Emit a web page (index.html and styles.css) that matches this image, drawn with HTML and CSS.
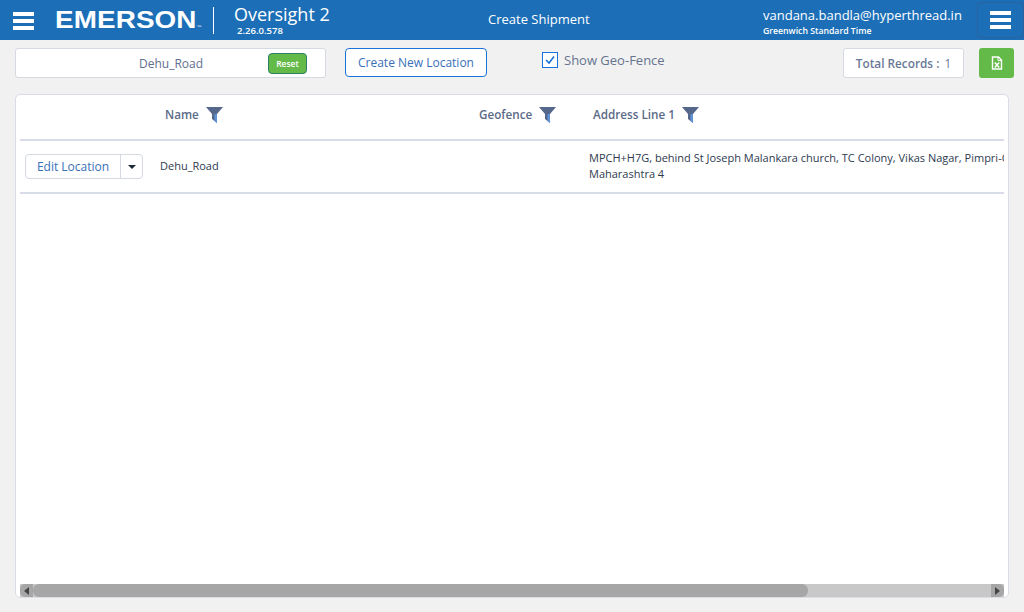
FILE: index.html
```html
<!DOCTYPE html>
<html lang="en">
<head>
  <meta charset="UTF-8">
  <title>Oversight 2 – Locations</title>
  <link rel="stylesheet" href="styles.css">
</head>
<body>

  <header class="topbar">
    <div class="burger"><span></span><span></span><span></span></div>
    <div class="logo">EMERSON<small>™</small></div>
    <div class="product">
      <div class="product-name">Oversight 2</div>
      <div class="product-version">2.26.0.578</div>
    </div>
    <div class="page-title">Create Shipment</div>
    <div class="user">
      <div class="user-mail">vandana.bandla@hyperthread.in</div>
      <div class="user-zone">Greenwich Standard Time</div>
    </div>
    <div class="menu-btn"><div class="burger"><span></span><span></span><span></span></div></div>
  </header>

  <div class="toolbar">
    <div class="search">
      <span class="search-value">Dehu_Road</span>
      <button class="reset">Reset</button>
    </div>
    <button class="create">Create New Location</button>
    <label class="geo">
      <svg class="check" width="16" height="16" viewBox="0 0 16 16">
        <rect x="0.5" y="0.5" width="15" height="15" fill="#fff" stroke="#1a73d8"/>
        <path d="M4 8l3 3 5-6.5" fill="none" stroke="#1a73d8" stroke-width="1.6"/>
      </svg>
      Show Geo-Fence
    </label>
    <div class="total"><b>Total Records :</b> <span>1</span></div>
    <button class="excel">
      <svg width="12" height="14" viewBox="0 0 12 14">
        <path d="M1.5 1h6l3 3v9h-9z" fill="none" stroke="#fff" stroke-width="1.4"/>
        <path d="M7 1v3.500h3.500" fill="none" stroke="#fff"/>
        <path d="M3.800 6.500l4.400 5M8.200 6.500l-4.400 5" stroke="#fff" stroke-width="1.500"/>
      </svg>
    </button>
  </div>

  <main class="card">
    <div class="grid-body">
      <div class="row head">
        <div></div>
        <div class="th">Name <svg class="funnel" width="17" height="17" viewBox="0 0 17 17"><path d="M0 1h17l-6 7v9l-5-4V8z" fill="#56678c"/><path d="M8.500 8H11v9l-2.500-2z" fill="#5f93d6"/></svg></div>
        <div class="th">Geofence <svg class="funnel" width="17" height="17" viewBox="0 0 17 17"><path d="M0 1h17l-6 7v9l-5-4V8z" fill="#56678c"/><path d="M8.500 8H11v9l-2.500-2z" fill="#5f93d6"/></svg></div>
        <div class="th th-addr">Address Line 1 <svg class="funnel" width="17" height="17" viewBox="0 0 17 17"><path d="M0 1h17l-6 7v9l-5-4V8z" fill="#56678c"/><path d="M8.500 8H11v9l-2.500-2z" fill="#5f93d6"/></svg></div>
      </div>
      <div class="row data">
        <div class="actions">
          <div class="split">
            <span class="split-main">Edit Location</span>
            <span class="split-arrow"></span>
          </div>
        </div>
        <div class="td">Dehu_Road</div>
        <div class="td"></div>
        <div class="td addr">MPCH+H7G, behind St Joseph Malankara church, TC Colony, Vikas Nagar, Pimpri-Chinchwad,<br>Maharashtra 4</div>
      </div>
    </div>
    <div class="hscroll">
      <div class="sb-btn sb-left"></div>
      <div class="sb-track"><div class="sb-thumb"></div></div>
      <div class="sb-btn sb-right"></div>
    </div>
  </main>

</body>
</html>
```

FILE: styles.css
```css
* { box-sizing: border-box; }
html, body { height: 100%; }
body {
  margin: 0;
  background: #f1f1f1;
  font-family: "Open Sans", sans-serif;
  overflow: hidden;
  display: flex;
  flex-direction: column;
}

/* top bar */
.topbar {
  height: 40px;
  flex: none;
  background: #1c6fb7;
  color: #fff;
  display: flex;
  align-items: center;
  padding-left: 13px;
  position: relative;
}
.burger { width: 21px; flex: none; margin-top: 1px; }
.burger span {
  display: block;
  height: 4px;
  background: #fff;
  margin-bottom: 3px;
}
.burger span:last-child { margin-bottom: 0; }
.logo {
  margin-left: 21px;
  width: 158px;
  font-family: "Liberation Sans", sans-serif;
  font-weight: 700;
  font-size: 23px;
  letter-spacing: 0.1px;
  transform: scaleX(1.21);
  transform-origin: left center;
  line-height: 40px;
  margin-top: 6px;
  white-space: nowrap;
}
.logo small { font-size: 4px; font-weight: 400; }
.product {
  border-left: 1px solid #fff;
  height: 27px;
  padding-left: 20px;
  width: 275px;
}
.product-name { font-size: 18px; line-height: 20px; margin-top: -3px; }
.product-version { font-size: 9.500px; line-height: 11px; font-weight: 600; margin: 1px 0 0 3px; }
.page-title { font-size: 13px; width: 275px; margin-top: -2px; }
.user { width: 214px; }
.user-mail { font-size: 13px; line-height: 18px; margin-top: 3px; }
.user-zone { font-size: 8.700px; line-height: 13px; font-weight: 600; margin-top: 1px; }
.menu-btn {
  width: 47px;
  height: 36px;
  margin-top: -1px;
  border: 1px solid #2a63a0;
  border-radius: 4px;
  background: #1c6fb7;
  display: flex;
  align-items: center;
  justify-content: center;
}
.menu-btn .burger { width: 21px; }

/* toolbar */
.toolbar {
  height: 54px;
  flex: none;
  display: flex;
  padding: 8px 10px 0 15px;
  align-items: flex-start;
}
.search {
  width: 311px;
  height: 30px;
  background: #fff;
  border: 1px solid #d5d9e2;
  border-radius: 3px;
  display: flex;
  align-items: center;
  padding-left: 123px;
  font-size: 12px;
  color: #5f6f8f;
}
.search-value { width: 129px; }
.reset {
  width: 39px;
  height: 21px;
  padding: 0;
  background: #63ba48;
  border: 1px solid #2f7f67;
  border-radius: 4px;
  color: #fff;
  font: 600 8.500px "Open Sans", sans-serif;
}
.create {
  margin-left: 19px;
  width: 142px;
  height: 29px;
  padding: 0;
  background: #fff;
  border: 1px solid #1a73d8;
  border-radius: 4px;
  color: #3a70b8;
  font: 12px "Open Sans", sans-serif;
}
.geo {
  margin: 3px 0 0 55px;
  width: 301px;
  display: flex;
  align-items: center;
  gap: 6px;
  font-size: 13px;
  color: #66738f;
}
.total {
  width: 121px;
  height: 30px;
  background: #fff;
  border: 1px solid #d5d9e2;
  border-radius: 3px;
  font-size: 11.800px;
  line-height: 29px;
  text-align: center;
  color: #6a7896;
}
.total b { font-weight: 600; }
.total span { margin-left: 2px; }
.excel {
  margin-left: 15px;
  width: 35px;
  height: 30px;
  padding: 0;
  background: #63ba48;
  border: none;
  border-radius: 3px;
  display: flex;
  align-items: center;
  justify-content: center;
}

/* grid card */
.card {
  width: 994px;
  height: 504px;
  margin-left: 15px;
  flex: none;
  background: #fff;
  border: 1px solid #d9dde6;
  border-radius: 5px;
  padding: 0 4px 0;
  display: flex;
  flex-direction: column;
}
.grid-body { flex: 1; overflow: hidden; }
.row {
  display: grid;
  grid-template-columns: 140px 314px 115px 415px;
  border-bottom: 2px solid #d8dce8;
  width: 984px;
}
.row.head { height: 46px; align-items: start; padding-top: 10px; }
.row.data { height: 53px; align-items: center; }
.th {
  font-size: 11.700px;
  font-weight: 600;
  color: #5b6a88;
  padding-left: 5px;
  display: flex;
  align-items: center;
  gap: 7px;
  white-space: nowrap;
}
.th-addr { padding-left: 4px; }
.funnel { flex: none; margin-top: 1px; }
.actions { padding-left: 5px; }
.split {
  width: 118px;
  height: 25px;
  border: 1px solid #d5d9e2;
  border-radius: 4px;
  display: flex;
  align-items: center;
  font-size: 12px;
  color: #3a70b8;
}
.split-main {
  width: 95px;
  line-height: 23px;
  text-align: center;
  border-right: 1px solid #d5d9e2;
}
.split-arrow {
  margin-left: 7px;
  border-top: 4px solid #1d2a3a;
  border-left: 4.500px solid transparent;
  border-right: 4.500px solid transparent;
}
.td { font-size: 11px; color: #2e3a4f; line-height: 16px; margin-top: -2px; }
.addr { white-space: nowrap; overflow: hidden; }

/* horizontal scrollbar */
.hscroll {
  height: 13px;
  flex: none;
  display: flex;
  background: #c8c8c8;
}
.sb-btn {
  width: 13px;
  background: #a6a6a6;
  display: flex;
  align-items: center;
  justify-content: center;
}
.sb-left { border-radius: 5px 0 0 5px; }
.sb-right { border-radius: 0 5px 5px 0; }
.sb-left::before {
  content: "";
  border-right: 5px solid #444;
  border-top: 4px solid transparent;
  border-bottom: 4px solid transparent;
}
.sb-right::before {
  content: "";
  border-left: 5px solid #444;
  border-top: 4px solid transparent;
  border-bottom: 4px solid transparent;
}
.sb-track { flex: 1; }
.sb-thumb {
  width: 775px;
  height: 13px;
  background: #a6a6a6;
  border-radius: 6px;
}
```
